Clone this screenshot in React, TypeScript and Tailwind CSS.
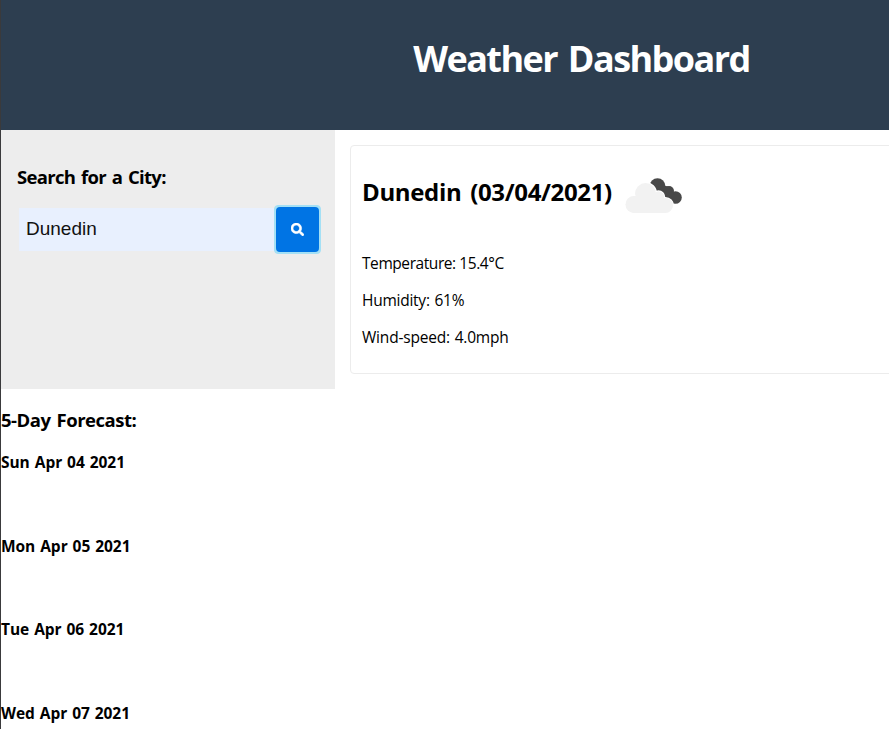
import { FaSearch } from 'react-icons/fa';

const days = ['Sun Apr 04 2021', 'Mon Apr 05 2021', 'Tue Apr 06 2021', 'Wed Apr 07 2021'];

function CloudIcon() {
  return (
    <svg className="h-9 w-[58px] shrink-0" viewBox="0 0 58 36">
      <g fill="#484848">
        <circle cx="33.500" cy="9" r="7.800" />
        <circle cx="45" cy="14" r="5" />
        <circle cx="51.500" cy="20.500" r="6.300" />
        <path d="M34 7l10 2.500 7 9-2 8.300-14-9z" />
      </g>
      <g fill="#f2f2f2" stroke="#fff" strokeWidth="1.500">
        <circle cx="21.500" cy="16.500" r="10.800" />
        <circle cx="34.500" cy="20" r="6" />
        <circle cx="41.500" cy="28.500" r="7.800" />
        <circle cx="10" cy="27.500" r="9" />
      </g>
      <g fill="#f2f2f2">
        <circle cx="21.500" cy="16.500" r="10.400" />
        <circle cx="34.500" cy="20" r="5.600" />
        <circle cx="41.500" cy="28.500" r="7.400" />
        <circle cx="10" cy="27.500" r="8.500" />
        <path d="M10 19.500h27l4.500 16.400H10z" />
      </g>
    </svg>
  );
}

export default function App() {
  return (
    <div className="h-[729px] overflow-hidden border-l border-[#3a3a3c] bg-white font-['Open_Sans','Noto_Sans',sans-serif] text-black">
      <div className="w-[1161px]">
        <header className="flex h-[130px] items-center justify-center bg-[#2d3e50] pb-3">
          <h1 className="text-4xl font-bold tracking-[-1.55px] [word-spacing:3px] whitespace-nowrap text-white">
            Weather Dashboard
          </h1>
        </header>

        <main className="flex h-[259px]">
          <aside className="w-[334px] bg-[#ededed] px-4 pt-[35px]">
            <h2 className="text-[18.5px] leading-6 font-bold tracking-[-0.7px] [word-spacing:1.7px] whitespace-nowrap">
              Search for a City:
            </h2>
            <form className="mt-4 flex items-center" onSubmit={(e) => e.preventDefault()}>
              <input
                className="ml-0.5 h-[43px] w-[255px] shrink-0 bg-[#e8f0fe] pb-0.5 pl-[7px] font-['Liberation_Sans',Arial,sans-serif] text-[19px] text-[#111] outline-none"
                defaultValue="Dunedin"
                aria-label="City"
              />
              <button
                className="flex h-[49px] w-[47px] shrink-0 items-center justify-center rounded-sm border border-[#a4e0f5] bg-[#a4e0f5] p-px"
                aria-label="Search"
              >
                <span className="flex h-full w-full items-center justify-center rounded bg-[#0074e4]">
                  <FaSearch className="size-[13px] stroke-white stroke-[24] text-white" />
                </span>
              </button>
            </form>
          </aside>

          <section className="mt-[15px] ml-[15px] h-[229px] flex-1 rounded border border-[#ececec] pl-[11px]">
            <div className="flex h-9 items-start pt-[31px]">
              <h2 className="-mt-[1px] w-[262px] text-2xl font-bold tracking-[-0.35px] [word-spacing:3px] whitespace-nowrap">
                Dunedin (03/04/2021)
              </h2>
              <CloudIcon />
            </div>
            <div className="mt-[69px] flex flex-col gap-[13px] text-[15.5px] leading-6">
              <p className="tracking-[-0.43px]">Temperature: 15.4°C</p>
              <p className="tracking-[-0.25px] [word-spacing:1px]">Humidity: 61%</p>
              <p className="tracking-[-0.2px] [word-spacing:1px]">Wind-speed: 4.0mph</p>
            </div>
          </section>
        </main>

        <section className="pt-[19px]">
          <h2 className="text-[18.5px] leading-6 font-bold tracking-[-0.48px] [word-spacing:1.7px]">5-Day Forecast:</h2>
          <ul className="mt-[18px]">
            {days.map((day) => (
              <li
                key={day}
                className="h-[83.6px] text-[15.5px] leading-6 font-bold tracking-[-0.05px] [word-spacing:1px]"
              >
                {day}
              </li>
            ))}
          </ul>
        </section>
      </div>
    </div>
  );
}
